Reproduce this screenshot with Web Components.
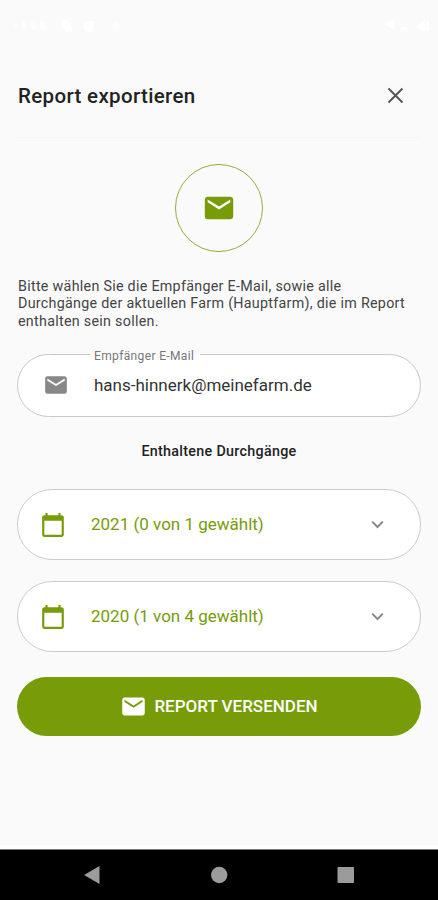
<!DOCTYPE html>
<html lang="de">
<head>
<meta charset="utf-8">
<title>Report exportieren</title>
<style>
body {
    margin: 0;
    background: #fafafa;
    font-family: Roboto, "Liberation Sans", sans-serif;
}
</style>
</head>
<body>
<export-screen>
    <status-bar></status-bar>
    <page-header>Report exportieren</page-header>
    <page-body>
        <round-badge><app-icon name="mail" style="--size: 34px"></app-icon></round-badge>
        <intro-text>Bitte wählen Sie die Empfänger E-Mail, sowie alle<br>Durchgänge der aktuellen Farm (Hauptfarm), die im Report<br>enthalten sein sollen.</intro-text>
        <mail-field label="Empfänger E-Mail">hans-hinnerk@meinefarm.de</mail-field>
        <section-title>Enthaltene Durchgänge</section-title>
        <year-row>2021 (0 von 1 gewählt)</year-row>
        <year-row>2020 (1 von 4 gewählt)</year-row>
        <send-button>REPORT VERSENDEN</send-button>
    </page-body>
    <nav-bar></nav-bar>
</export-screen>

<script>
const icons = {
    mail: '<path d="M20 4H4c-1.1 0-2 .9-2 2v12c0 1.1.9 2 2 2h16c1.1 0 2-.9 2-2V6c0-1.1-.9-2-2-2zm0 4l-8 5-8-5V6l8 5 8-5v2z"/>',
    calendar: '<path d="M20 3h-1V1h-2v2H7V1H5v2H4c-1.1 0-2 .9-2 2v16c0 1.1.9 2 2 2h16c1.1 0 2-.9 2-2V5c0-1.1-.9-2-2-2zm0 18H4V8h16v13z"/>',
    close: '<path d="M4 4L20 20M20 4L4 20" fill="none" stroke="currentColor" stroke-width="2.2"/>',
    chevron: '<path d="M4.5 8L12 15.5L19.500 8" fill="none" stroke="currentColor" stroke-width="2.8"/>'
};

// registers an element whose shadow root is cloned from the given markup
function define(name, html, connected) {
    const template = document.createElement('template');
    template.innerHTML = html;

    window.customElements.define(name, class extends HTMLElement {
        constructor() {
            super();
            this.attachShadow({mode: 'open'});
            this.shadowRoot.appendChild(template.content.cloneNode(true));
        }

        connectedCallback() {
            if (connected) {
                connected(this);
            }
        }
    });
}

define('app-icon', `
<style>
:host {
    display: block;
    flex: none;
    width: var(--size, 24px);
    height: var(--size, 24px);
}
svg {
    display: block;
    width: 100%;
    height: 100%;
    fill: currentColor;
}
</style>
<svg viewBox="0 0 24 24"></svg>
`, el => {
    el.shadowRoot.querySelector('svg').innerHTML = icons[el.getAttribute('name')];
});

define('export-screen', `
<style>
:host {
    display: flex;
    flex-direction: column;
    height: 900px;
    overflow: hidden;
    background: #fafafa;
}
</style>
<slot></slot>
`);

define('status-bar', `
<style>
:host {
    display: flex;
    justify-content: space-between;
    align-items: center;
    height: 52px;
    box-sizing: border-box;
    padding: 0 8px 0 14px;
}
svg {
    display: block;
    fill: #fff;
}
</style>
<svg width="114" height="16" viewBox="0 0 114 16">
    <path d="M0 5h3v6H0zM8 3h4v9H8zM17 3h5v9h-5zM26 3h5v9h-5z" opacity=".6"/>
    <path d="M48 2h5l5 7v5h-6l-4-5z"/>
    <path d="M70 3h10v8l-3 3h-5l-3-4z"/>
    <path d="M97 8l5-5 5 5-5 4z" opacity=".6"/>
</svg>
<svg width="46" height="16" viewBox="0 0 46 16">
    <path d="M0 6l11-5v11zM17 9h6v3h-6zM32 9l9-8v13zM42 3h3v10h-3z"/>
</svg>
`);

define('page-header', `
<style>
:host {
    display: flex;
    justify-content: space-between;
    align-items: center;
    height: 86px;
    box-sizing: border-box;
    margin: 0 17px;
    padding: 2px 15px 0 1px;
    border-bottom: 1px solid #f6f6f6;
    color: #222;
    font-size: 20.5px;
    font-weight: 500;
    letter-spacing: .34px;
}
app-icon {
    color: #555;
}
</style>
<slot></slot>
<app-icon name="close" style="--size: 21px"></app-icon>
`);

define('page-body', `
<style>
:host {
    display: flex;
    flex-direction: column;
    flex: 1;
    padding: 26px 17px 0;
}
</style>
<slot></slot>
`);

define('round-badge', `
<style>
:host {
    display: flex;
    align-items: center;
    justify-content: center;
    align-self: center;
    width: 88px;
    height: 88px;
    box-sizing: border-box;
    border: 1px solid #8fb03a;
    border-radius: 50%;
    color: #779c08;
}
</style>
<slot></slot>
`);

define('intro-text', `
<style>
:host {
    display: block;
    margin: 26px 0 0 1px;
    color: #444;
    font-size: 14.3px;
    letter-spacing: .28px;
    line-height: 17.3px;
    white-space: nowrap;
}
</style>
<slot></slot>
`);

define('mail-field', `
<style>
:host {
    display: flex;
    align-items: center;
    position: relative;
    height: 63px;
    box-sizing: border-box;
    margin-top: 24px;
    padding-left: 25px;
    border: 1px solid #c8c8c8;
    border-radius: 32px;
    background: #fff;
    color: #333;
    font-size: 17px;
}
app-icon {
    margin-right: 25px;
    color: #888;
}
label {
    position: absolute;
    left: 72px;
    top: -6px;
    padding: 0 6px 0 4px;
    background: linear-gradient(#fafafa 40%, #fff 40%);
    color: #777;
    font-size: 12px;
    letter-spacing: .36px;
    line-height: 14px;
}
</style>
<label></label>
<app-icon name="mail" style="--size: 26px"></app-icon>
<slot></slot>
`, el => {
    el.shadowRoot.querySelector('label').textContent = el.getAttribute('label');
});

define('section-title', `
<style>
:host {
    display: block;
    margin: 26px 0 29px;
    color: #222;
    font-size: 14.3px;
    font-weight: 500;
    letter-spacing: .3px;
    line-height: 17px;
    text-align: center;
}
</style>
<slot></slot>
`);

define('year-row', `
<style>
:host {
    display: flex;
    align-items: center;
    height: 71px;
    box-sizing: border-box;
    margin-bottom: 21px;
    padding: 0 34px 0 22px;
    border: 1px solid #ccc;
    border-radius: 35px;
    background: #fff;
    color: #779c08;
    font-size: 17px;
}
span {
    flex: 1;
    margin-left: 25px;
}
.calendar {
    --size: 26px;
    margin-top: 1px;
}
.chevron {
    --size: 17px;
    color: #888;
}
</style>
<app-icon name="calendar" class="calendar"></app-icon>
<span><slot></slot></span>
<app-icon name="chevron" class="chevron"></app-icon>
`);

define('send-button', `
<style>
:host {
    display: flex;
    align-items: center;
    justify-content: center;
    gap: 7px;
    height: 59px;
    margin-top: 4px;
    border-radius: 30px;
    background: #779c08;
    color: #fff;
    font-size: 17px;
    font-weight: 500;
}
</style>
<app-icon name="mail" style="--size: 27px"></app-icon>
<slot></slot>
`);

define('nav-bar', `
<style>
:host {
    display: flex;
    align-items: center;
    justify-content: center;
    height: 51px;
    box-sizing: border-box;
    border-top: 1px solid #777;
    background: #000;
    box-shadow: 0 -4px #fff;
}
svg {
    display: block;
    fill: #9b9b9b;
}
</style>
<svg width="438" height="50" viewBox="0 0 438 50">
    <path d="M84 25L99.500 16V34z"/>
    <circle cx="219.200" cy="25" r="8.200"/>
    <rect x="337.500" y="17" width="16.500" height="16" rx="1"/>
</svg>
`);
</script>
</body>
</html>
